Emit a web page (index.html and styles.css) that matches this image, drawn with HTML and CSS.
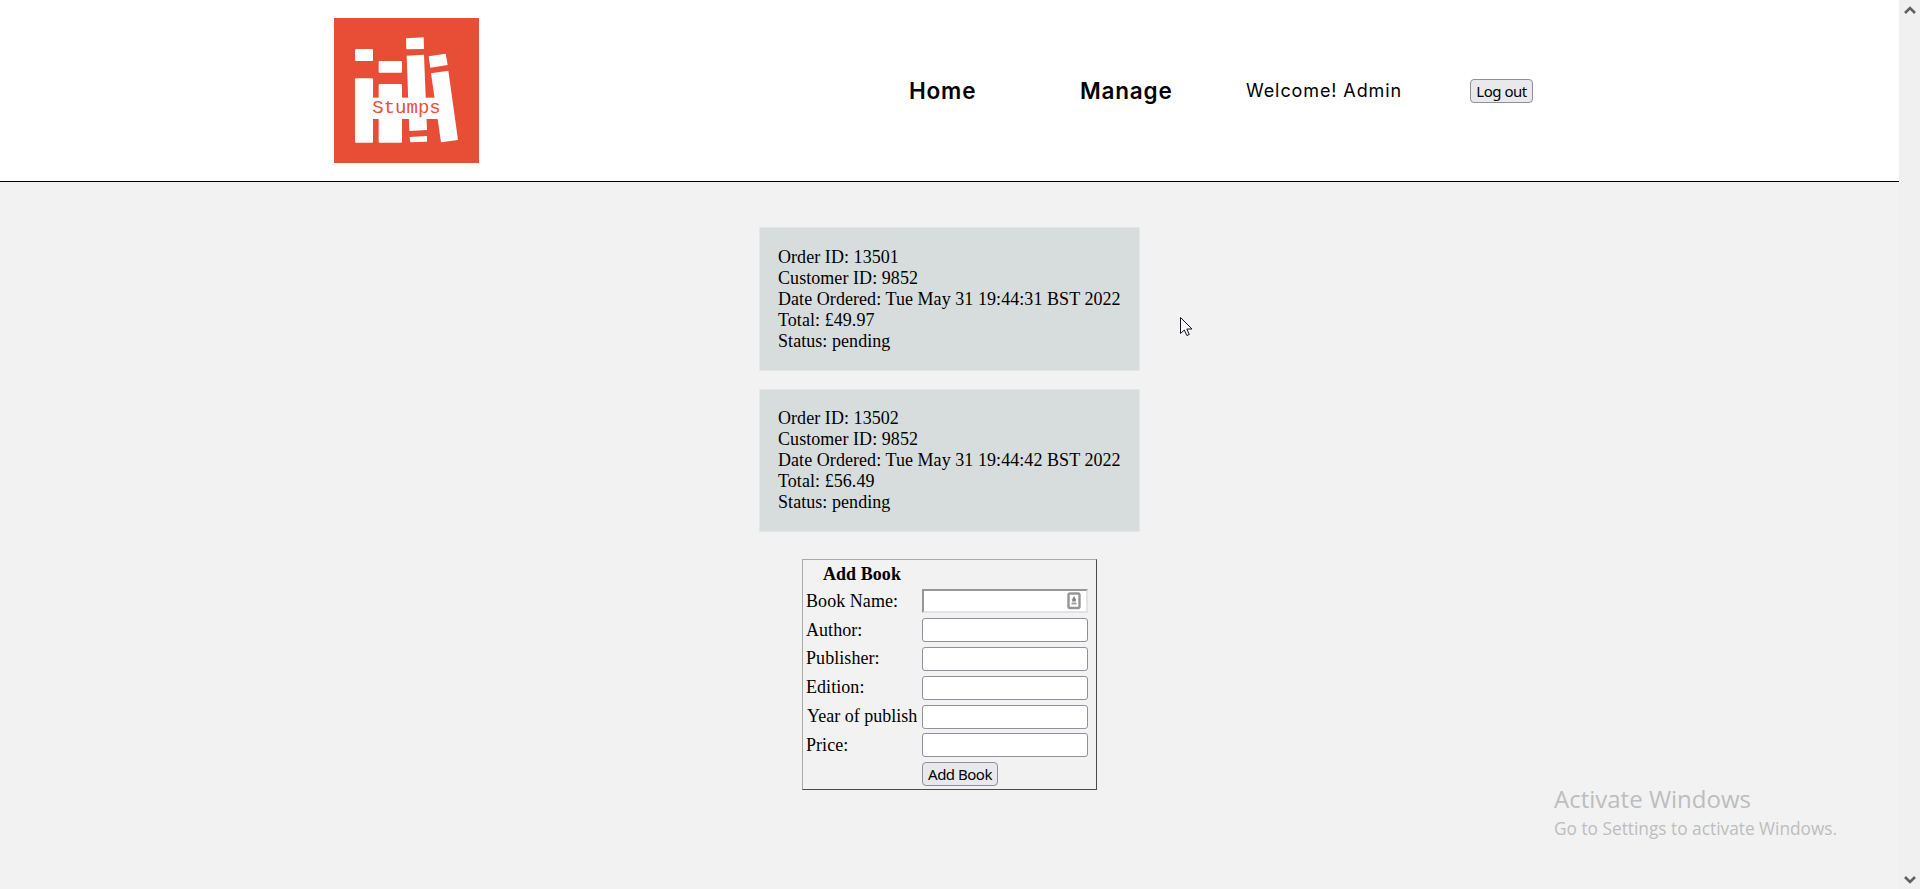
FILE: index.html
```html
<!DOCTYPE html>
<html lang="en">
<head>
<meta charset="utf-8">
<title>Stumps</title>
<link rel="stylesheet" href="styles.css">
</head>
<body>
<div class="page">
  <header class="header">
    <svg class="logo" viewBox="42 54 435 435">
      <rect x="42" y="54" width="435" height="435" fill="#e84e36"/>
      <g fill="#fff">
        <rect x="105" y="147" width="54" height="36" rx="3"/>
        <rect x="105" y="235" width="54" height="193" rx="3"/>
        <rect x="176" y="183" width="70" height="35" rx="3"/>
        <rect x="176" y="252" width="70" height="176" rx="3"/>
        <path d="M258 115l53-3 1 35-53 1zM260 167l52-3 9 226-53 3zM269 411l52-3v17l-50 2zM326 169l51-8 6 34-52 8zM333 220l52-8 29 208-51 7z"/>
        <rect x="145" y="293" width="230" height="64"/>
      </g>
      <text class="logo-text" x="157" y="340" textLength="205">Stumps</text>
    </svg>
    <nav class="nav">
      <a class="link home">Home</a>
      <a class="link manage">Manage</a>
      <span class="welcome">Welcome! Admin</span>
      <button class="btn logout">Log out</button>
    </nav>
  </header>
  <main class="main">
    <section class="order">
      <div>Order ID: 13501</div>
      <div>Customer ID: 9852</div>
      <div>Date Ordered: Tue May 31 19:44:31 BST 2022</div>
      <div>Total: £49.97</div>
      <div>Status: pending</div>
    </section>
    <section class="order second">
      <div>Order ID: 13502</div>
      <div>Customer ID: 9852</div>
      <div>Date Ordered: Tue May 31 19:44:42 BST 2022</div>
      <div>Total: £56.49</div>
      <div>Status: pending</div>
    </section>
    <form class="book-form">
      <div class="form-title">Add Book</div>
      <div class="row"><label>Book Name:</label>
        <div class="field inset">
          <svg class="autofill" width="14" height="18" viewBox="0 0 14 18"><rect x="1.5" y="1.5" width="11" height="14.5" rx="1.5" fill="#fff" stroke="#969696" stroke-width="2.400"/><path d="M7 4l1.800 3.500v2H5.200v-2z" fill="#808080"/><path d="M4.500 11.500h5" stroke="#a0a0a0" stroke-width="2"/></svg>
        </div></div>
      <div class="row"><label>Author:</label><input class="field"></div>
      <div class="row"><label>Publisher:</label><input class="field"></div>
      <div class="row"><label>Edition:</label><input class="field"></div>
      <div class="row"><label class="year">Year of publish</label><input class="field"></div>
      <div class="row"><label>Price:</label><input class="field"></div>
      <div class="row"><span></span><button class="btn add" type="button">Add Book</button></div>
    </form>
  </main>
</div>
<aside class="scrollbar">
  <svg width="12" height="10" viewBox="0 0 12 10"><path d="M1 8l5-5 5 5" fill="none" stroke="#606060" stroke-width="2.600"/></svg>
  <svg width="12" height="10" viewBox="0 0 12 10"><path d="M1 2l5 5 5-5" fill="none" stroke="#606060" stroke-width="2.600"/></svg>
</aside>
<div class="watermark">
  <div class="wm-title">Activate Windows</div>
  <div class="wm-text">Go to Settings to activate Windows.</div>
</div>
<svg class="cursor" width="13" height="20" viewBox="0 0 13 20"><path d="M.5.5v16l3.800-3.500 2.500 5.500 2.500-1-2.500-5.500H12z" fill="#fff" stroke="#15152a"/></svg>
</body>
</html>
```

FILE: styles.css
```css
* { box-sizing: border-box; }
body {
  margin: 0;
  height: 889px;
  display: flex;
  overflow: hidden;
  background: #f2f2f2;
  color: #000;
  font: 18px/21.1px "Liberation Serif", serif;
  letter-spacing: .06px;
}
.page { width: 1899px; }
.header {
  height: 182px;
  display: flex;
  justify-content: space-between;
  padding: 18px 366px 0 334px;
  background: #fff;
  border-bottom: 1px solid #000;
}
.logo { width: 145px; height: 145px; }
.logo-text { font: 57px "Liberation Mono", monospace; fill: #e84e36; letter-spacing: 0; }
.nav {
  display: flex;
  align-items: center;
  height: 145px;
  width: 624px;
  font-family: Inter, sans-serif;
  white-space: nowrap;
}
.link { font-size: 22.5px; font-weight: 600; letter-spacing: .8px; }
.home { width: 171px; }
.manage { width: 166px; }
.welcome { width: 224px; font-size: 18px; letter-spacing: .9px; }
.btn {
  height: 24px;
  padding: 0;
  border: 1px solid #8f8f9d;
  border-radius: 4px;
  background: #e9e9ed;
  color: #000;
  font: 15px/20px "Noto Sans", sans-serif;
  letter-spacing: -.5px;
  white-space: nowrap;
}
.logout { width: 63px; }
.main {
  display: flex;
  flex-direction: column;
  align-items: center;
  padding-top: 45px;
}
.order {
  width: 381px;
  height: 144px;
  margin-bottom: 18px;
  padding: 19px 0 0 18px;
  border: 1px solid #e3e7e7;
  background: #d7dddd;
  white-space: nowrap;
}
.second { height: 143px; margin-bottom: 27px; padding-top: 18px; }
.book-form {
  width: 295px;
  height: 231px;
  padding: 3px 0 0 3px;
  border: 1px solid;
  border-color: #a9a9a9 #4b4b4b #4b4b4b #a9a9a9;
}
.form-title {
  width: 112px;
  height: 24px;
  line-height: 23px;
  text-align: center;
  font-weight: bold;
}
.row {
  display: grid;
  grid-template-columns: 116px 166px;
  align-items: center;
  height: 28.8px;
}
.year { padding-left: 1px; letter-spacing: 0; }
.field {
  width: 166px;
  height: 24px;
  padding: 0;
  border: 1px solid #8f8f9d;
  border-radius: 3px;
  background: #fff;
}
.inset {
  display: flex;
  justify-content: flex-end;
  padding: 1px 5px 0 0;
  border: 2px solid;
  border-color: #979797 #e3e3e3 #e3e3e3 #979797;
  border-radius: 0;
}
.add { width: 76px; }
.scrollbar {
  width: 21px;
  display: flex;
  flex-direction: column;
  justify-content: space-between;
  align-items: center;
  padding: 5px 0 4px;
  background: #f0f0f0;
}
.watermark {
  position: absolute;
  left: 1554px;
  top: 784px;
  color: #bdbdbd;
  font-family: "Open Sans", sans-serif;
  letter-spacing: 0;
  white-space: nowrap;
}
.wm-title { font-size: 24px; line-height: 30px; }
.wm-text { font-size: 17.3px; line-height: 29px; }
.cursor { position: absolute; left: 1180px; top: 317px; }
```
